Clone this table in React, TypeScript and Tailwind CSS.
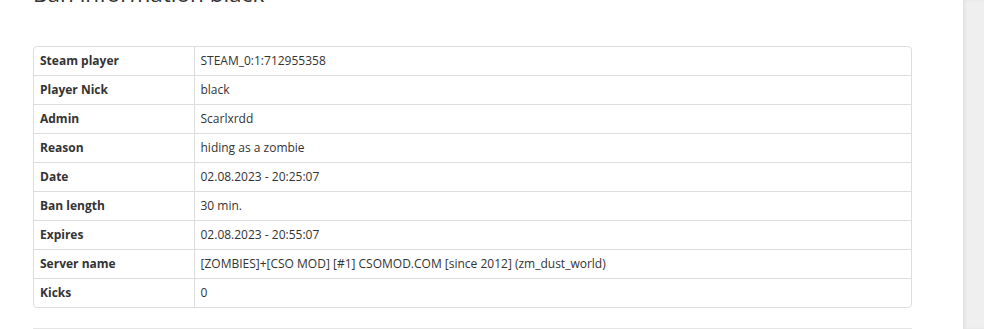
import React from 'react';

const rows: Array<[string, string]> = [
  ['Steam player', 'STEAM_0:1:712955358'],
  ['Player Nick', 'black'],
  ['Admin', 'Scarlxrdd'],
  ['Reason', 'hiding as a zombie'],
  ['Date', '02.08.2023 - 20:25:07'],
  ['Ban length', '30 min.'],
  ['Expires', '02.08.2023 - 20:55:07'],
  ['Server name', '[ZOMBIES]+[CSO MOD] [#1] CSOMOD.COM [since 2012] (zm_dust_world)'],
  ['Kicks', '0'],
];

const App: React.FC = () => {
  return (
    <div
      className="flex h-[329px] w-[984px] overflow-hidden bg-white text-[#333]"
      style={{ fontFamily: '"Open Sans", "Liberation Sans", sans-serif' }}
    >
      {/* Main content */}
      <div className="flex-1 pl-[33px] pr-[51px]">
        <h2 className="-mt-[21px] mb-[38px] text-[22.5px] leading-[29px] font-normal text-[#333]">
          Ban information black
        </h2>

        {/* Ban details table */}
        <div className="overflow-hidden rounded-[4px] border border-[#ddd]">
          <table className="w-full border-collapse text-[12px]">
            <tbody>
              {rows.map(([label, value], i) => (
                <tr key={label} className={i > 0 ? 'border-t border-[#ddd]' : ''}>
                  <td className="w-[160px] border-r border-[#ddd] px-[6px] py-[5px] leading-[18px] font-bold text-[#333]">
                    {label}
                  </td>
                  <td className="px-[6px] py-[5px] leading-[18px] text-[#333]">{value}</td>
                </tr>
              ))}
            </tbody>
          </table>
        </div>

        <hr className="mt-[20px] border-t border-[#e5e5e5]" />
      </div>

      {/* Sidebar edge */}
      <div className="w-[21px] bg-[#efefef] shadow-[inset_2px_0_3px_rgba(0,0,0,0.06)]" />
    </div>
  );
};

export default App;
